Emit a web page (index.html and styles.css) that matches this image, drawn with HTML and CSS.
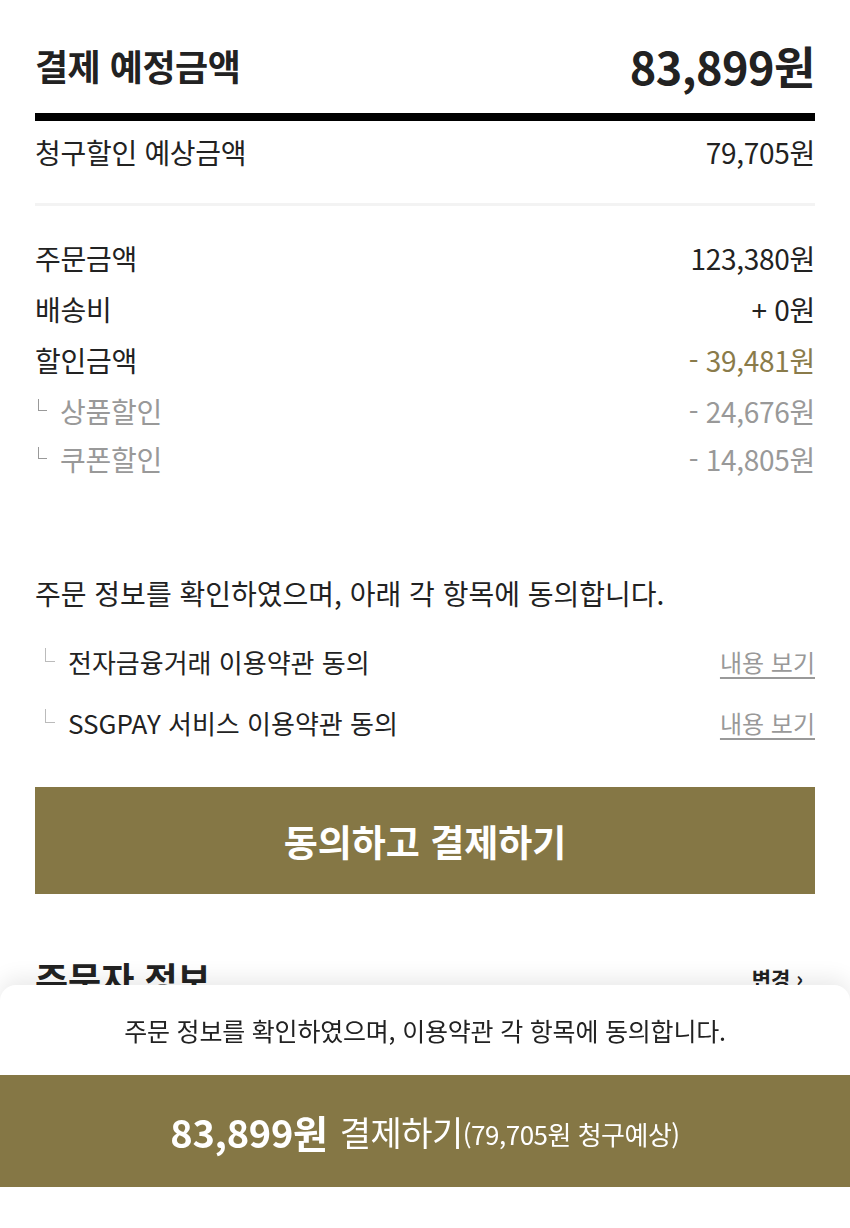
FILE: index.html
```html
<!DOCTYPE html>
<html lang="ko">
<head>
<meta charset="utf-8">
<link rel="stylesheet" href="styles.css">
</head>
<body>
<div class="page">
  <div class="head-row">
    <span class="head-title">결제 예정금액</span>
    <span class="head-amount">83,899원</span>
  </div>
  <div class="black-bar"></div>
  <div class="row card-row">
    <span>청구할인 예상금액</span>
    <span>79,705원</span>
  </div>
  <div class="thin-divider"></div>

  <div class="rows">
    <div class="row"><span>주문금액</span><span>123,380원</span></div>
    <div class="row"><span>배송비</span><span>+ 0원</span></div>
    <div class="row"><span>할인금액</span><span class="olive">- 39,481원</span></div>
    <div class="row sub"><span class="sub-label"><i class="corner"></i>상품할인</span><span>- 24,676원</span></div>
    <div class="row sub last"><span class="sub-label"><i class="corner"></i>쿠폰할인</span><span>- 14,805원</span></div>
  </div>

  <p class="agree-title">주문 정보를 확인하였으며, 아래 각 항목에 동의합니다.</p>
  <div class="terms">
    <div class="term"><span class="term-label"><i class="corner light"></i>전자금융거래 이용약관 동의</span><a class="view">내용 보기</a></div>
    <div class="term"><span class="term-label"><i class="corner light"></i>SSGPAY 서비스 이용약관 동의</span><a class="view">내용 보기</a></div>
  </div>

  <button class="pay-btn">동의하고 결제하기</button>

  <div class="orderer">
    <span class="orderer-title">주문자 정보</span>
    <span class="orderer-edit">변경 ›</span>
  </div>
</div>

<div class="sheet">
  <p class="sheet-text">주문 정보를 확인하였으며, 이용약관 각 항목에 동의합니다.</p>
  <button class="sheet-btn"><b class="sb-amount">83,899원</b><span class="sb-label">결제하기</span><span class="sb-sub">(79,705원 청구예상)</span></button>
</div>
</body>
</html>
```
FILE: styles.css
```css
* { box-sizing: border-box; }
html, body {
  margin: 0;
  padding: 0;
  background: #fff;
}
body {
  font-family: "Noto Sans CJK KR", "Noto Sans", sans-serif;
  color: #222;
  height: 1228px;
  overflow: hidden;
}
.page {
  padding: 40px 35px 0;
}
.head-row {
  display: flex;
  justify-content: space-between;
  align-items: center;
  height: 50px;
}
.head-title {
  font-size: 36px;
  font-weight: 700;
  letter-spacing: -0.5px;
}
.head-amount {
  font-size: 45px;
  font-weight: 700;
  letter-spacing: -0.5px;
}
.black-bar {
  height: 8px;
  background: #000;
  margin-top: 23px;
}
.row {
  display: flex;
  justify-content: space-between;
  align-items: center;
  height: 40px;
  font-size: 28px;
  letter-spacing: -0.3px;
}
.card-row {
  margin-top: 11px;
}
.thin-divider {
  height: 3px;
  background: #f3f3f3;
  margin-top: 31px;
}
.rows {
  margin-top: 32px;
  display: flex;
  flex-direction: column;
  gap: 11px;
}
.rows .last { margin-top: -3px; }
.olive { color: #8a7b4a; }
.sub { color: #999; }
.sub-label {
  display: flex;
  align-items: center;
}
.corner {
  display: inline-block;
  width: 9px;
  height: 12px;
  border-left: 1.5px solid #999;
  border-bottom: 1.5px solid #999;
  margin: 0 13px 12px 3px;
}
.corner.light {
  border-color: #bbb;
  margin: 0 13px 12px 10px;
  width: 10px;
  height: 14px;
}
.agree-title {
  margin: 94px 0 0;
  height: 40px;
  line-height: 40px;
  font-size: 28px;
  letter-spacing: 0;
}
.terms {
  margin-top: 28px;
  display: flex;
  flex-direction: column;
  gap: 21px;
}
.term {
  display: flex;
  justify-content: space-between;
  align-items: center;
  height: 40px;
  font-size: 26px;
  letter-spacing: 0;
}
.term-label {
  display: flex;
  align-items: center;
}
.view {
  color: #999;
  font-size: 24px;
  text-decoration: underline;
  text-underline-offset: 5px;
  text-decoration-thickness: 1.5px;
}
.pay-btn {
  display: block;
  width: 100%;
  height: 107px;
  margin-top: 45px;
  border: 0;
  background: #857745;
  color: #fff;
  font-family: inherit;
  font-size: 37px;
  font-weight: 700;
  letter-spacing: 0;
}
.orderer {
  margin-top: 64px;
  display: flex;
  justify-content: space-between;
  align-items: center;
  height: 40px;
}
.orderer-title {
  font-size: 36px;
  font-weight: 700;
}
.orderer-edit {
  font-size: 21px;
  font-weight: 700;
  margin-right: 12px;
}
.sheet {
  position: fixed;
  left: 0;
  right: 0;
  bottom: 0;
  height: 243px;
  background: #fff;
  border-radius: 16px 16px 0 0;
  box-shadow: 0 -6px 22px rgba(0, 0, 0, 0.09);
  padding-top: 25px;
}
.sheet-text {
  margin: 0;
  height: 40px;
  line-height: 40px;
  text-align: center;
  font-size: 25px;
  letter-spacing: -0.2px;
}
.sheet-btn {
  display: flex;
  justify-content: center;
  align-items: center;
  width: 100%;
  height: 112px;
  margin-top: 25px;
  border: 0;
  background: #857745;
  color: #fff;
  font-family: inherit;
}
.sb-amount {
  font-size: 38px;
  font-weight: 700;
  letter-spacing: -0.3px;
  margin-right: 12px;
}
.sb-label {
  font-size: 34px;
  font-weight: 400;
  letter-spacing: -0.5px;
}
.sb-sub {
  font-size: 26px;
  letter-spacing: -0.5px;
  margin-top: 4px;
}
```
